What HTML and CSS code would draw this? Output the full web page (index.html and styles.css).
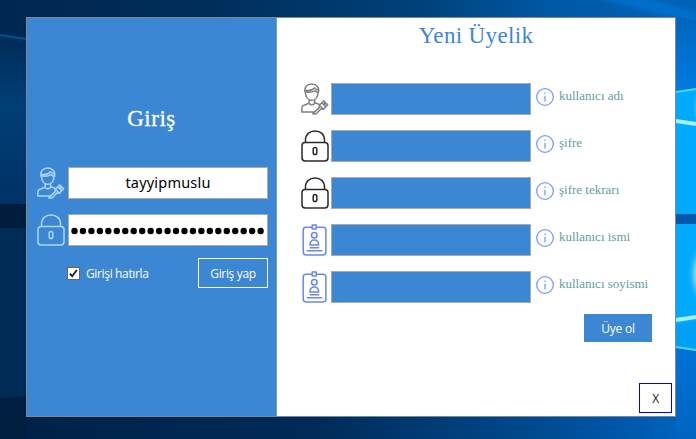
FILE: index.html
```html
<!DOCTYPE html>
<html lang="tr">
<head>
<meta charset="utf-8">
<title>Giriş</title>
<link rel="stylesheet" href="styles.css">
</head>
<body>
<svg class="wallpaper" viewBox="0 0 696 439" preserveAspectRatio="none" aria-hidden="true">
  <defs>
    <linearGradient id="sky" x1="0" x2="1" y1="0" y2="0">
      <stop offset="0" stop-color="#00274f"/><stop offset=".3" stop-color="#002e5b"/>
      <stop offset=".6" stop-color="#004179"/><stop offset=".8" stop-color="#0059a6"/><stop offset="1" stop-color="#0064b8"/>
    </linearGradient>
    <linearGradient id="floor" x1="0" x2="1" y1="0" y2="0">
      <stop offset="0" stop-color="#002146"/><stop offset=".45" stop-color="#002b58"/>
      <stop offset=".72" stop-color="#004586"/><stop offset=".9" stop-color="#0058aa"/><stop offset="1" stop-color="#0066c4"/>
    </linearGradient>
    <linearGradient id="side" x1="0" x2="0" y1="0" y2="1">
      <stop offset="0" stop-color="#002c57"/><stop offset=".4" stop-color="#003f76"/><stop offset="1" stop-color="#003265"/>
    </linearGradient>
    <linearGradient id="beam" x1="0" x2="0" y1="0" y2="1">
      <stop offset="0" stop-color="#0065bd"/><stop offset=".22" stop-color="#0080ea"/><stop offset=".7" stop-color="#0078e0"/><stop offset="1" stop-color="#0064c0"/>
    </linearGradient>
    <radialGradient id="glow"><stop offset="0" stop-color="#d7f4ff"/><stop offset=".55" stop-color="#7cd5ff"/><stop offset="1" stop-color="#00aeff" stop-opacity="0"/></radialGradient>
    <filter id="soft"><feGaussianBlur stdDeviation="2"/></filter>
  </defs>
  <rect width="696" height="220" fill="url(#sky)"/>
  <rect y="220" width="696" height="219" fill="url(#floor)"/>
  <path d="M0 36 26 40V204H0Z" fill="url(#side)"/>
  <path d="M0 35 26 39" stroke="#005590" stroke-width="2"/>
  <path d="M0 204H26V228H0Z" fill="#001d3c"/>
  <path d="M0 228H26V396L0 399Z" fill="#002b55"/>
  <path d="M0 399 26 396V439H0Z" fill="#001f40"/>
  <path d="M590 -4 696 24V12L640 -4Z" fill="#0078dc" opacity=".6" filter="url(#soft)"/>
  <path d="M676 16 696 21V439H676Z" fill="url(#beam)"/>
  <path d="M676 92 696 89V350L676 347Z" fill="#00aaff"/>
  <path d="M676 325 696 321V350L676 347Z" fill="#00a1f5"/>
  <ellipse cx="703" cy="107" rx="11" ry="25" fill="url(#glow)" opacity=".65"/>
  <ellipse cx="705" cy="274" rx="18" ry="34" fill="url(#glow)"/>
  <path d="M676 92 696 89M676 347 696 350" stroke="#48d9fa" stroke-width="2"/>
  <path d="M676 121 696 124M676 320 696 317" stroke="#a5f1ff" stroke-width="4"/>
  <path d="M676 214H696V224H676Z" fill="#0058a9"/>
</svg>
<svg class="symbols" aria-hidden="true">
  <symbol id="user" viewBox="0 0 28 32">
    <path d="M4.2 9.5C2.8 4.5 5.7 1 10.7 1s8 3.7 6.7 8.5M4.4 7.2c4.2.8 7.3-.3 9.5-2.3 1 1.3 2 2.1 3.5 2.4M5.2 8.5c4 2 8.5-.8 8.5-.8s1.8 1.5 3.1 1.8M4.5 9c0 4.8 2.4 8.2 6.3 8.2S17 13.7 17 9M8.1 16.5v3.2c0 1.4-5.2 1.9-6.5 3.3C.8 24 .8 27 .8 29h12M13.6 16.5v3l5 2.1M8.1 20.5c1.6 1.5 4 1.4 5.5 0M12 31h3l5.2-5.2 2 .6 4.5-4.6-1.5-1.5-1.1 1-.8-.8 1-1.2-1.7-1.4-4.5 4.7.2 2-6.3 5.8Zm7.3-8 2.8 3M21 20l3 3"/>
  </symbol>
  <symbol id="lock" viewBox="0 0 28 32">
    <rect x="1" y="12.5" width="26" height="18.5" rx="3.2"/>
    <path d="M4.5 12.3V10C4.5 4.3 8.5 1 14 1s9.5 3.3 9.5 9v2.3"/>
    <rect x="12.2" y="17.5" width="3.6" height="7" rx="1.8"/>
  </symbol>
  <symbol id="badge" viewBox="0 0 28 32">
    <path d="M10.5 3.2H5C3 3.2 2.2 4.2 2.2 6v22.1c0 2 .9 2.8 2.8 2.8h17.2c2 0 2.7-.9 2.7-2.8V6c0-1.9-.8-2.8-2.7-2.8h-6.5"/>
    <rect x="11.2" y="1" width="4" height="4"/>
    <circle cx="13.3" cy="11.3" r="2.8"/>
    <path d="M8.9 20.9c.2-3.2 1.5-4.8 4.4-4.8s4.2 1.6 4.4 4.8ZM9.2 23.7h8.4M6.2 26.8h14.6"/>
  </symbol>
  <symbol id="info" viewBox="0 0 18 18">
    <circle cx="9" cy="9" r="8.3"/><path d="M9 7.7v5.7M9 4.5v1.4"/>
  </symbol>
</svg>

<main class="window">
  <section class="login">
    <h1 class="login-title"><span>Giriş</span></h1>
    <div class="login-row"><svg class="icon light"><use href="#user"/></svg><div class="field"><span class="username">tayyipmuslu</span></div></div>
    <div class="login-row"><svg class="icon light"><use href="#lock"/></svg><div class="field"><svg class="dots" viewBox="0 0 198 30" aria-hidden="true"><path class="mask" d="M5.5 16H200"/></svg></div></div>
    <div class="login-actions">
      <label class="remember"><span class="check"><svg viewBox="0 0 11 11"><path d="m2 5.7 2.2 2.5L8.8 2"/></svg></span><span class="remember-text">Girişi hatırla</span></label>
      <button class="button sign-in">Giriş yap</button>
    </div>
  </section>
  <section class="signup">
    <h2 class="signup-title"><span>Yeni Üyelik</span></h2>
    <div class="rows">
      <div class="row"><svg class="icon gray"><use href="#user"/></svg><div class="field blue"></div><svg class="info"><use href="#info"/></svg><span class="hint">kullanıcı adı</span></div>
      <div class="row"><svg class="icon black"><use href="#lock"/></svg><div class="field blue"></div><svg class="info"><use href="#info"/></svg><span class="hint">şifre</span></div>
      <div class="row"><svg class="icon black"><use href="#lock"/></svg><div class="field blue"></div><svg class="info"><use href="#info"/></svg><span class="hint">şifre tekrarı</span></div>
      <div class="row"><svg class="icon violet"><use href="#badge"/></svg><div class="field blue"></div><svg class="info"><use href="#info"/></svg><span class="hint">kullanıcı ismi</span></div>
      <div class="row"><svg class="icon violet"><use href="#badge"/></svg><div class="field blue"></div><svg class="info"><use href="#info"/></svg><span class="hint">kullanıcı soyismi</span></div>
    </div>
    <button class="button join">Üye ol</button>
    <button class="button close">X</button>
  </section>
</main>
</body>
</html>
```
FILE: styles.css
```css
* { box-sizing: border-box; }
body { margin: 0; width: 696px; height: 439px; overflow: hidden; padding: 17px 0 0 26px; background: #002b58; }
.wallpaper { position: absolute; left: 0; top: 0; width: 696px; height: 439px; z-index: -1; }
.symbols { position: absolute; width: 0; height: 0; }
.window { display: flex; width: 650px; height: 400px; border: 1px solid #7f8890; background: #fff; }
.login { width: 250px; padding-top: 87px; background: #3c87d4; border-right: 1px solid #6c9dcc; }
h1, h2 { margin: 0; font-family: "Liberation Serif", serif; font-weight: 400; text-align: center; white-space: nowrap; }
.login-title { height: 62px; font-size: 23px; line-height: 28px; color: #fff; letter-spacing: .5px; -webkit-text-stroke: .3px #fff; }
.login-row { display: flex; gap: 3px; height: 32px; margin: 0 0 15px 10px; }
.icon { flex: none; width: 28px; height: 32px; fill: none; stroke: currentColor; stroke-width: 1.5; stroke-linecap: round; stroke-linejoin: round; }
.light { color: #b0d4f7; }
.gray { color: #808080; }
.black { color: #2a2a2a; }
.violet { color: #6a87ea; }
.field { flex: none; display: flex; align-items: center; justify-content: center; width: 200px; height: 32px; border: 1px solid #aaa; background: #fff; overflow: hidden; }
.blue { background: #3c87d4; }
.username { font: 14.5px/20px "Noto Sans", sans-serif; letter-spacing: .2px; color: #000; transform: translateY(-1px); }
.dots { width: 198px; height: 30px; }
.mask { fill: none; stroke: #000; stroke-width: 6.4; stroke-linecap: round; stroke-dasharray: 0 8.46; }
.login-actions { display: flex; justify-content: space-between; margin: -3px 8px 0 40px; }
.remember { display: flex; align-items: center; gap: 6px; height: 31px; font: 12px/16px "Open Sans", sans-serif; letter-spacing: -.35px; color: #fff; }
.check { width: 13px; height: 13px; border: 1px solid #666; background: #fff; }
.check svg { display: block; width: 11px; height: 11px; fill: none; stroke: #222; stroke-width: 1.9; }
.button { padding: 0; border-radius: 0; font: 12px/16px "Open Sans", sans-serif; letter-spacing: -.2px; }
.sign-in { width: 70px; height: 30px; padding-top: 1px; border: 1px solid #fff; background: #3c87d4; color: #fff; letter-spacing: -.35px; }
.signup { display: flex; flex-direction: column; flex: 1; }
.signup-title { height: 65px; font-size: 23px; line-height: 35px; color: #3c87d4; letter-spacing: .35px; }
.rows { display: grid; gap: 15px; padding-left: 24px; }
.row { display: flex; height: 32px; }
.row .field { margin-left: 2px; }
.info { width: 18px; height: 18px; margin: 5px 5px 0; fill: none; stroke: #739cff; stroke-width: 1.3; }
.hint { padding-top: 5px; font: 13px/16px "Liberation Serif", serif; color: #5f9ea0; white-space: nowrap; }
.join { align-self: flex-end; width: 68px; height: 28px; margin: 11px 23px 0 0; padding-top: 1px; border: 0; background: #3c87d4; color: #fff; }
.close { align-self: flex-end; width: 33px; height: 30px; margin: auto 3px 3px 0; padding-top: 1px; border: 1px solid #0000ff; background: #fff; color: #222; }
```
